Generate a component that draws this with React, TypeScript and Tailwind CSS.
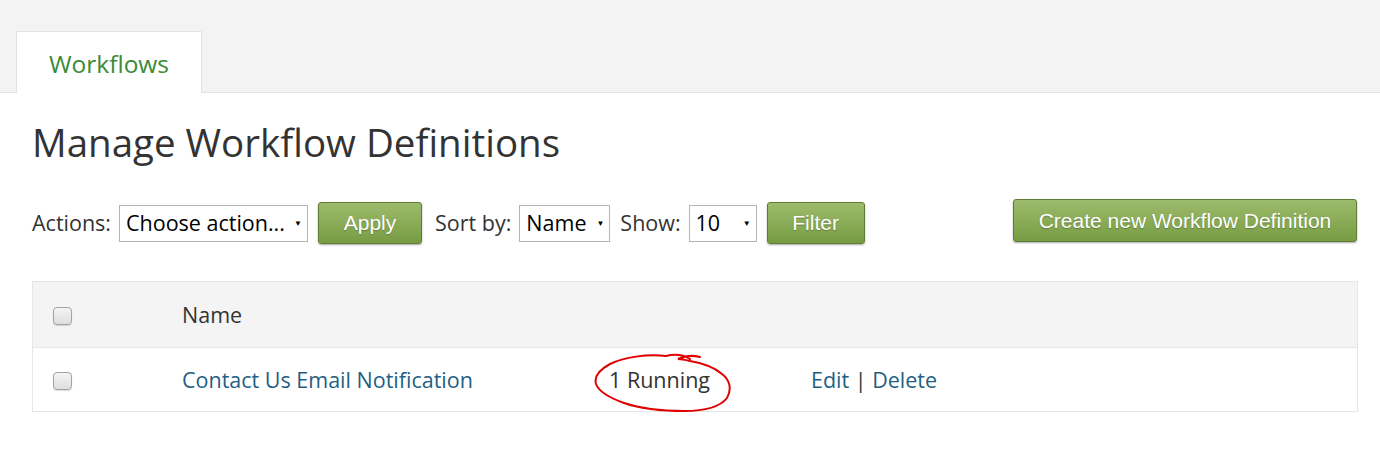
import React from 'react';

const body = { fontFamily: '"Open Sans", "Noto Sans", sans-serif' };
const btnFont = { fontFamily: '"Liberation Sans", Arial, sans-serif' };

function GreenButton({ label, className }: { label: string; className: string }) {
  return (
    <button
      style={btnFont}
      className={`rounded-[3px] border border-[#5e7d33] bg-gradient-to-b from-[#9dbb6c] to-[#779c43] text-white text-[21px] shadow-[0_1px_2px_rgba(0,0,0,0.35)] [text-shadow:0_1px_1px_rgba(0,0,0,0.25)] ${className}`}
    >
      {label}
    </button>
  );
}

function FakeSelect({ value, width }: { value: string; width: string }) {
  return (
    <div className={`flex h-[37px] items-center justify-between overflow-hidden whitespace-nowrap border border-[#b5b5b5] bg-white pl-[6px] pr-[5px] text-[21.5px] text-black ${width}`}>
      <span>{value}</span>
      <span className="ml-[4px] text-[8px] leading-none">▼</span>
    </div>
  );
}

function Checkbox() {
  return (
    <div className="h-[18px] w-[19px] rounded-[4px] border border-[#a3a3a3] bg-gradient-to-b from-[#f4f4f4] to-[#dedede] shadow-[0_1px_1px_rgba(0,0,0,0.15)]" />
  );
}

export default function App() {
  return (
    <div style={body} className="h-[470px] w-[1380px] bg-white text-[#333]">
      {/* tab strip */}
      <div className="flex h-[93px] items-end border-b border-[#e3e3e3] bg-[#f3f3f4] pl-[16px]">
        <div className="-mb-px flex h-[62px] w-[186px] items-center justify-center border border-b-0 border-[#e3e3e3] bg-white pt-[3px] text-[24.5px] text-[#3a8a36]">
          Workflows
        </div>
      </div>

      <div className="px-[32px]">
        <h1 className="mt-[23px] text-[38.5px] leading-[52px] text-[#333]">Manage Workflow Definitions</h1>

        {/* toolbar */}
        <div className="mt-[34px] flex items-center text-[21.5px]">
          <span className="mr-[8px]">Actions:</span>
          <FakeSelect value="Choose action..." width="w-[189px]" />
          <GreenButton label="Apply" className="ml-[10px] h-[42px] w-[104px]" />
          <span className="ml-[13px] mr-[8px]">Sort by:</span>
          <FakeSelect value="Name" width="w-[91px]" />
          <span className="ml-[10px] mr-[8px]">Show:</span>
          <FakeSelect value="10" width="w-[68px]" />
          <GreenButton label="Filter" className="ml-[10px] h-[42px] w-[98px]" />
          <div className="flex-1" />
          <GreenButton label="Create new Workflow Definition" className="-mt-[5px] mr-[-9px] h-[43px] w-[344px]" />
        </div>

        {/* table */}
        <div className="mt-[37px] w-[1326px] border border-[#e6e6e6] text-[21.5px]">
          <div className="flex h-[65px] items-center bg-[#f4f4f4] pt-[2px]">
            <div className="w-[149px] pl-[20px]">
              <Checkbox />
            </div>
            <div className="text-[#333]">Name</div>
          </div>
          <div className="flex h-[64px] items-center border-t border-[#e6e6e6] pt-[2px]">
            <div className="w-[149px] pl-[20px]">
              <Checkbox />
            </div>
            <div className="w-[427px] text-[#1f5f84]">Contact Us Email Notification</div>
            <div className="relative w-[202px] text-[#333]">
              1 Running
              <svg
                className="absolute left-[-17px] top-[-14px]"
                width="150"
                height="66"
                viewBox="0 0 150 66"
                fill="none"
              >
                <path
                  d="M98 9 C 90 4, 82 4, 74 6 C 55 4, 32 7, 18 14 C 7 20, 2 27, 4 34 C 7 42, 18 48, 32 53 C 50 59, 70 61, 92 61 C 112 61, 128 57, 135 48 C 140 39, 138 30, 130 24 C 122 17, 110 13, 98 11 C 94 10, 90 9, 86 9 C 92 6, 100 5, 108 7"
                  stroke="#e00000"
                  strokeWidth="2"
                  strokeLinecap="round"
                />
              </svg>
            </div>
            <div className="text-[#1f5f84]">
              Edit <span className="text-[#333]">|</span> Delete
            </div>
          </div>
        </div>
      </div>
    </div>
  );
}
